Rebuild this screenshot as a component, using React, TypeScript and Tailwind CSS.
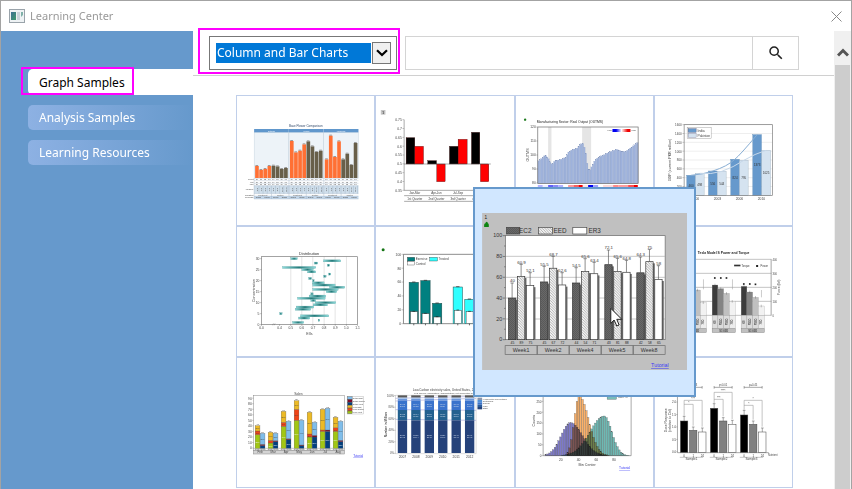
import React from "react";
import { MdSearch } from "react-icons/md";

type Anchor = "start" | "middle" | "end";

function T({ x, y, s = 11, a = "middle", fill = "#444", rot, bold, children }: {
  x: number; y: number; s?: number; a?: Anchor; fill?: string; rot?: boolean; bold?: boolean; children: React.ReactNode;
}) {
  return (
    <text x={x} y={y} fontSize={s} textAnchor={a} fill={fill} fontWeight={bold ? 700 : 400}
      transform={rot ? `rotate(-90 ${x} ${y})` : undefined}>
      {children}
    </text>
  );
}

function R({ x1, x2, y1, y2, fill, stroke, sw = 1, o }: {
  x1: number; x2: number; y1: number; y2: number; fill: string; stroke?: string; sw?: number; o?: number;
}) {
  return <rect x={x1} y={y1} width={x2 - x1} height={y2 - y1} fill={fill} stroke={stroke} strokeWidth={sw} opacity={o} />;
}

function L({ d, c = "#555", w = 2 }: { d: string; c?: string; w?: number }) {
  return <path d={d} stroke={c} strokeWidth={w} fill="none" />;
}

function Chart({ box, children }: { box: string; children: React.ReactNode }) {
  return (
    <svg viewBox={box} className="block h-full w-full font-['Liberation_Sans',Arial,sans-serif]" aria-hidden="true">
      {children}
    </svg>
  );
}

function TutorialText({ x, y, s = 12 }: { x: number; y: number; s?: number }) {
  return <text x={x} y={y} fontSize={s} fill="#3a3af5" textDecoration="underline">Tutorial</text>;
}

function FlowerChart() {
  const tops = [
    [219, 231, 228, 219, 218, 220, 228, 225],
    [144, 178, 173, 154, 145, 160, 177, 173],
    [199, 128, 192, 145, 199, 182, 216, 150],
  ];
  return (
    <Chart box="6 9 411 387">
      <T x={212} y={103} s={9} fill="#334a6b">Base Flower Comparison</T>
      {tops.map((g, i) => {
        const x = 57 + i * 104.5;
        return (
          <g key={i}>
            <R x1={x} x2={x + 104} y1={118} y2={256} fill="#edf3f8" stroke="#b5c6d6" />
            <R x1={x} x2={x + 104} y1={108} y2={118} fill="#6097cc" />
            <T x={x + 52} y={116} s={7} fill="#fff">{["setosa", "versic", "virginica"][i]}</T>
            <R x1={x} x2={x + 104} y1={278} y2={302} fill="#cfdeeb" />
            <R x1={x} x2={x + 104} y1={309} y2={318} fill="#c3d7ea" />
            {g.map((t, j) => {
              const bx = x + 3 + j * 12.4;
              return (
                <g key={j}>
                  <R x1={bx} x2={bx + 11} y1={t} y2={255} fill={j < 4 ? "#ff7034" : "#685f49"} />
                  <R x1={bx + 1} x2={bx + 9} y1={t - 3} y2={t} fill="#9a9a9a" />
                  {[261, 269, 276].map((y) => <T key={y} x={bx + 5} y={y} s={6}>{10 + j}</T>)}
                  <T x={bx + 8} y={290} s={7} rot>{4 + j}.2</T>
                  <L d={`M${bx + 11.5} 278V302`} c="#90a6ba" w={1} />
                </g>
              );
            })}
            <T x={x + 26} y={308} s={6}>Treatment</T>
            <T x={x + 78} y={308} s={6}>Control</T>
            {[13, 39, 65, 91].map((d) => <T key={d} x={x + d} y={316} s={6}>Group</T>)}
            <L d={`M${x} 256V318M${x + 52} 303V318`} c="#8fa2b5" w={1} />
          </g>
        );
      })}
      {[["Count", 262], ["Min", 269], ["Max", 276], ["Measure", 292], ["Condition", 308], ["Replicate", 316]].map(([t, y]) => (
        <T key={t} x={55} y={Number(y)} s={6} a="end">{t}</T>
      ))}
      <L d="M57 263H370M57 271H370M57 278H370M57 302H370M57 309H370M57 318H370" c="#9fb0c2" w={1} />
    </Chart>
  );
}

function QuarterChart() {
  const labels = ["0.75", "0.7", "0.65", "0.6", "0.55", "0.5", "0.45", "0.4", "0.35"];
  const bars = [
    [94, 120, 134, 213], [159, 185, 203, 213], [224, 250, 160, 213], [290, 315, 118, 213],
    [120, 146, 160, 213], [186, 211, 213, 266], [250, 277, 139, 213], [317, 342, 213, 266],
  ];
  return (
    <Chart box="4 9 411 387">
      <R x1={18} x2={32} y1={51} y2={65} fill="#c4c4c4" />
      <T x={25} y={62} s={10} bold>1</T>
      {labels.map((l, i) => (
        <g key={l}>
          <T x={81} y={84 + i * 26.5} s={10} a="end">{l}</T>
          <L d={`M83 ${80 + i * 26.5}H88`} w={1} />
        </g>
      ))}
      {bars.map(([a, b, c, d], i) => <R key={i} x1={a} x2={b} y1={c} y2={d} fill={i < 4 ? "#000" : "#f00"} stroke="#300" />)}
      <L d="M88 80V292M88 213H348M88 292H348M88 308H348M88 325H348" w={1.5} />
      {["Jan-Mar", "Apr-Jun", "Jul-Sep", "Oct-Dec"].map((m, i) => (
        <g key={m}>
          <T x={120 + i * 65} y={304} s={9}>{m}</T>
          <T x={120 + i * 65} y={320} s={9}>{["1st", "2nd", "3rd", "4th"][i]} Quarter</T>
        </g>
      ))}
    </Chart>
  );
}

function OutputChart() {
  const pts = [[67, 205], [80, 195], [89, 186], [98, 195], [104, 208], [110, 215], [118, 203], [130, 201], [140, 198], [152, 192], [158, 178], [170, 170], [185, 166], [194, 154], [202, 151], [206, 160], [212, 185], [217, 225], [222, 234], [228, 222], [238, 202], [250, 192], [265, 186], [280, 178], [304, 169], [315, 174], [330, 176], [345, 165], [355, 157], [368, 147]];
  const top = (x: number) => {
    const i = Math.max(0, pts.findIndex((p) => p[0] > x) - 1);
    const [a, b] = [pts[i], pts[i + 1]];
    return a[1] + ((x - a[0]) / (b[0] - a[0])) * (b[1] - a[1]);
  };
  const strip: [number, number, string][] = [[67, 82, "#b4b4ff"], [82, 98, "#eeeeff"], [98, 113, "#6060f8"], [113, 128, "#8a8af8"], [128, 143, "#b0b0ff"], [158, 174, "#ff9a9a"], [174, 189, "#f86060"], [189, 202, "#f00000"], [202, 218, "#ffe4e4"], [218, 233, "#0000f0"], [233, 248, "#a0a0ff"], [263, 293, "#ffdada"], [293, 308, "#ff8a8a"], [308, 338, "#ff9e9e"], [338, 354, "#ff5050"], [354, 367, "#f00000"]];
  return (
    <Chart box="2 9 411 387">
      <defs>
        <linearGradient id="heat"><stop stopColor="#0000f0" offset=".2" /><stop stopColor="#fff" offset=".5" /><stop stopColor="#f00000" offset=".85" /></linearGradient>
      </defs>
      <circle cx={29} cy={80} r={3.5} fill="#1c7a1c" />
      <T x={64} y={90} s={10} a="start" fill="#222">Manufacturing Sector: Real Output (OUTMS)</T>
      <R x1={98} x2={108} y1={102} y2={271} fill="#e5e5e5" />
      <R x1={200} x2={227} y1={102} y2={271} fill="#e5e5e5" />
      {Array.from({ length: 70 }, (_, i) => {
        const x = 67 + i * 4.3;
        return <R key={i} x1={x} x2={x + 4.3} y1={top(x + 2)} y2={271} fill="#9eb2dc" stroke="#8698bd" sw={0.5} />;
      })}
      <R x1={67} x2={368} y1={102} y2={271} fill="none" stroke="#666" sw={2} />
      {[120, 110, 100, 90, 80].map((n, i) => (
        <g key={n}><T x={61} y={106 + i * 42} s={10} a="end">{n}</T><L d={`M62 ${102 + i * 42}H67`} w={1} /></g>
      ))}
      <T x={42} y={186} s={11} rot>OUTMS</T>
      <R x1={291} x2={345} y1={108} y2={117} fill="url(#heat)" />
      <T x={289} y={115} s={7} a="end">Low</T><T x={347} y={115} s={7} a="start">High</T>
      {strip.map(([a, b, c]) => <R key={a} x1={a} x2={b} y1={276} y2={284} fill={c} />)}
    </Chart>
  );
}

function GdpChart() {
  const dark = [[100, 247, 460], [165, 234, 556], [232, 199, 824], [298, 125, 1373]];
  const light = [[126, 241, 498], [192, 235, 544], [258, 202, 795], [325, 172, 1025]];
  return (
    <Chart box="5 9 411 387">
      {[0, 1, 2, 3, 4, 5, 6, 7].map((i) => (
        <g key={i}>
          <L d={`M92 ${95 + i * 26.5}H357`} c="#ccc" w={1} />
          <L d={`M87 ${95 + i * 26.5}H92`} w={1} />
          <T x={85} y={99 + i * 26.5} s={9} a="end">{1600 - i * 200}</T>
        </g>
      ))}
      {dark.map(([x, y, v]) => <g key={v}><R x1={x} x2={x + 26} y1={y} y2={307} fill="#6699cc" stroke="#4e7fae" /><T x={x + 13} y={(y + 307) / 2 + 4} s={9} fill="#333">{v}</T></g>)}
      {light.map(([x, y, v]) => <g key={v}><R x1={x} x2={x + 26} y1={y} y2={307} fill="#d5e3f0" stroke="#8da3b8" /><T x={x + 13} y={(y + 307) / 2 + 4} s={9} fill="#333">{v}</T></g>)}
      <path d="M112 247Q150 244 178 234Q222 220 244 199Q260 186 311 125" stroke="#88aed4" strokeWidth={3} fill="none" />
      <path d="M139 241Q172 245 205 235Q240 223 271 202Q305 182 338 172" stroke="#c6d8ea" strokeWidth={3} fill="none" />
      <R x1={92} x2={357} y1={95} y2={307} fill="none" stroke="#777" sw={2} />
      <R x1={101} x2={173} y1={103} y2={136} fill="#fff" stroke="#777" />
      <R x1={104} x2={128} y1={107} y2={118} fill="#6699cc" stroke="#446" />
      <R x1={104} x2={128} y1={121} y2={133} fill="#d5e3f0" stroke="#668" />
      <T x={132} y={117} a="start" s={10}>India</T>
      <T x={132} y={131} a="start" s={10}>Pakistan</T>
      {[2000, 2003, 2006, 2010].map((n, i) => <T key={n} x={126 + i * 66} y={322} s={10}>{n}</T>)}
      <T x={53} y={201} s={11} rot>GDP (current PKR million)</T>
    </Chart>
  );
}

function DistributionChart() {
  const bars = [[167, 187], [265, 317], [237, 248], [276, 284], [142, 242], [200, 234], [217, 242], [280, 287], [265, 273], [220, 230], [232, 237], [232, 267], [233, 300], [283, 329], [233, 309], [273, 305], [227, 234], [222, 272], [187, 270], [227, 242], [240, 302], [234, 277], [183, 236], [180, 227], [0, 0], [133, 141], [196, 281], [190, 224], [249, 254], [172, 206]];
  return (
    <Chart box="6 6 411 387">
      <defs><linearGradient id="tealFade"><stop stopColor="#8edcdc" offset="0" /><stop stopColor="#247a7a" offset=".5" /><stop stopColor="#8edcdc" offset="1" /></linearGradient></defs>
      <T x={222} y={89} s={12} fill="#333">Distribution</T>
      {[167, 200, 233, 267, 300, 334].map((x) => <L key={x} d={`M${x} 95V298`} c="#d8d8d8" />)}
      {bars.map(([a, b], i) => b > 0 && <R key={i} x1={a} x2={b} y1={98 + i * 6.6} y2={104 + i * 6.6} fill="url(#tealFade)" stroke="#579c9c" sw={0.8} />)}
      <R x1={79} x2={367} y1={95} y2={298} fill="none" stroke="#777" sw={2} />
      {[30, 25, 20, 15, 10, 5, 0].map((n, i) => <g key={n}><T x={73} y={105 + i * 33} s={10} a="end">{n}</T><L d={`M74 ${101 + i * 33}H79`} w={1} /></g>)}
      {["0.0", "0.4", "0.5", "0.6", "0.7", "0.8", "0.9", "1.0", "1.1"].map((n, i) => {
        const x = i === 0 ? 79 : 100 + i * 33.4;
        return <g key={n}><T x={x} y={312} s={10}>{n}</T><L d={`M${x} 298V303`} w={1} /></g>;
      })}
      <L d="M112 301L115 295M117 301L120 295" w={1} />
      <T x={223} y={329} s={11}>EIIs</T>
      <T x={60} y={197} s={11} rot>Concentration</T>
    </Chart>
  );
}

function ExerciseChart() {
  const bars: [number, number, number, string][] = [[523, 172, 260, "#008080"], [558, 167, 266, "#008080"], [593, 235, 276, "#008080"], [655, 186, 256, "#30ffff"], [690, 223, 260, "#30ffff"], [725, 240, 268, "#30ffff"]];
  return (
    <Chart box="424 6 411 387">
      <circle cx={445} cy={74} r={4.5} fill="#157515" />
      <L d="M506 88H800M506 88V296H800" w={2} />
      {[100, 80, 60, 40, 20, 0].map((n, i) => <g key={n}><T x={499} y={92 + i * 41.6} s={10} a="end">{n}</T><L d={`M500 ${88 + i * 41.6}H506`} w={1} /></g>)}
      {bars.map(([x, t, w, c]) => (
        <g key={x}>
          <R x1={x} x2={x + 28} y1={t} y2={296} fill={c} stroke="#1c4a4a" sw={1.5} />
          <R x1={x + 4} x2={x + 25} y1={w} y2={296} fill="#fff" stroke="#444" sw={1.5} />
          <L d={`M${x + 9} ${t - 1}H${x + 19}M${x + 10} ${w - 1}H${x + 18}M${x + 14} 296V301`} c="#222" w={2} />
        </g>
      ))}
      <R x1={518} x2={540} y1={97} y2={108} fill="#008080" stroke="#222" />
      <R x1={585} x2={608} y1={97} y2={108} fill="#30ffff" stroke="#222" />
      <R x1={518} x2={540} y1={110} y2={120} fill="#fff" stroke="#222" />
      <T x={543} y={106} a="start" s={9}>Exercise</T>
      <T x={611} y={106} a="start" s={9}>Treated</T>
      <T x={543} y={119} a="start" s={9}>Control</T>
    </Chart>
  );
}

function TorqueChart() {
  const groups = [[-22, 175, 187, 195, 233], [65, 180, 191, 205, 229], [152, 184, 201, 217, 243]];
  return (
    <Chart box="-106 6 411 387">
      <T x={22} y={87} s={10} a="start" bold fill="#222">Tesla Model S Power and Torque</T>
      <L d="M-80 103H243M-80 145H243M-80 187H243M-80 229H243M-80 271H243" c="#888" w={1.5} />
      <L d="M242 103V271" c="#777" />
      {[400, 300, 200, 100, 0].map((n, i) => <T key={n} x={246} y={107 + i * 42} s={8} a="start">{n}</T>)}
      <T x={270} y={187} s={10} rot>Force (lbf)</T>
      {groups.map(([x, ...tops]) => (
        <g key={x}>
          {tops.map((t, j) => {
            const bx = x + j * 17.3;
            return (
              <g key={j}>
                <R x1={bx} x2={bx + 17.3} y1={t} y2={271} fill={["#3c3c3c", "#848484", "#c0c0c0", "#f2f2f2"][j]} stroke="#888" sw={0.7} />
                <R x1={bx} x2={bx + 17.3} y1={271} y2={311} fill={j === 3 ? "#ededed" : "#dcdcdc"} stroke="#999" />
                <text x={bx + 12} y={291} fontSize={8} textAnchor="middle" fontWeight={700} fill="#444" transform={`rotate(-90 ${bx + 12} 291)`}>{["60", "P85D", "P90D", "70D"][j]}</text>
                <L d={`M${bx + 8.5} ${t - 4}V${t + 4}`} w={1} />
              </g>
            );
          })}
          <L d={`M${x + 61} ${x > 100 ? 195 : 163}V${x > 100 ? 217 : 193}`} c="#999" w={1.5} />
          <R x1={x} x2={x + 70} y1={311} y2={323} fill="#c0c0c0" stroke="#777" />
          <T x={x + 35} y={320} s={8} bold>S3 60D</T>
        </g>
      ))}
      {[[73, 159], [91, 159], [108, 159], [160, 177], [178, 177], [195, 178]].map(([x, y]) => <R key={x} x1={x - 2.5} x2={x + 2.5} y1={y - 2.5} y2={y + 2.5} fill="#222" />)}
      <R x1={131} x2={150} y1={119} y2={124} fill="#333" />
      <T x={153} y={125} s={8} a="start">Torque</T>
      <R x1={197} x2={203} y1={120} y2={126} fill="#222" />
      <T x={210} y={125} s={8} a="start">Power</T>
    </Chart>
  );
}

function SalesChart() {
  const left = [[233, 222, 206], [258, 250, 226], [208, 196, 163], [190, 157, 131], [240, 231, 166], [223, 219, 157], [223, 212, 181]];
  const right = [[266, 262, 229], [254, 251, 229], [248, 245, 193], [266, 264, 190], [240, 235, 196], [223, 219, 154], [254, 250, 193]];
  const lc = ["#a1c614", "#f04416", "#ecba26"];
  const rc = ["#03407e", "#7a0a28", "#7fbdea"];
  const stack = (tops: number[], colors: string[], x: number) =>
    tops.map((t, j) => {
      const b = j === 0 ? 274 : tops[j - 1];
      return (
        <g key={j}>
          <R x1={x} x2={x + 14.5} y1={t} y2={b} fill={colors[j]} stroke="#555" sw={0.8} />
          {b - t > 8 && <T x={x + 7} y={(t + b) / 2 + 3} s={6} fill={j === 0 ? "#eee" : "#444"}>{Math.round((b - t) * 0.6)}%</T>}
        </g>
      );
    });
  return (
    <Chart box="6 3 411 387">
      <T x={190} y={114} s={10}>Sales</T>
      <R x1={55} x2={328} y1={116} y2={280} fill="#fff" stroke="#888" sw={1.5} />
      <R x1={55} x2={328} y1={280} y2={291} fill="#d4d4d4" stroke="#888" sw={1.5} />
      <L d="M55 274H328" w={1} />
      {left.map((t, i) => (
        <g key={i}>
          {stack(t, lc, 60 + i * 39)}
          {stack(right[i], rc, 75 + i * 39)}
          <T x={67 + i * 39} y={t[2] - 2} s={7}>{Math.round((274 - t[2]) * 0.6)}</T>
          <T x={82 + i * 39} y={right[i][2] - 2} s={7}>{Math.round((274 - right[i][2]) * 0.6)}</T>
          <T x={75 + i * 39} y={279} s={6}>North South</T>
          <T x={75 + i * 39} y={289} s={9}>{["Feb", "Mar", "Apr", "May", "Jun", "Jul", "Aug"][i]}</T>
        </g>
      ))}
      {Array.from({ length: 10 }, (_, i) => <g key={i}><T x={50} y={277 - i * 16.6} s={10} a="end">{i * 10}</T><L d={`M51 ${273 - i * 16.6}H55`} w={1} /></g>)}
      {["Retail East", "Retail Central", "Retail West", "Web East", "Web Central", "Web West"].map((n, i) => (
        <g key={n}>
          <R x1={337} x2={351} y1={119 + i * 8.6} y2={127 + i * 8.6} fill={[rc[2], rc[1], rc[0], lc[2], lc[1], lc[0]][i]} stroke="#333" />
          <T x={353} y={126 + i * 8.6} s={6} a="start">{n}</T>
        </g>
      ))}
      <R x1={336} x2={386} y1={118} y2={171} fill="none" stroke="#999" />
      <TutorialText x={354} y={299} s={9} />
    </Chart>
  );
}

function EnergyChart() {
  const bands: [number, number, string][] = [[115, 122, "#585858"], [122, 126, "#a8c4ea"], [126, 131, "#6c97dc"], [131, 159, "#3a73cc"], [159, 190, "#23618f"], [190, 288, "#25427a"]];
  return (
    <Chart box="424 3 411 387">
      <T x={534} y={102} s={9} a="start">Low-Carbon electricity sales, United States, 2007-2012</T>
      <T x={538} y={111} s={7} a="start">U.S. Energy Information Administration, net generation by source</T>
      <L d="M482 115V290H724V115Z" c="#999" w={1} />
      <L d="M482 124L724 118M482 132L724 124M482 158L724 160M482 187L724 190" c="#8f8fd0" w={1.5} />
      {[0, 1, 2, 3, 4, 5].map((i) => {
        const x = 489 + i * 40.3;
        return (
          <g key={i}>
            {bands.map(([a, b, c]) => <R key={a} x1={x} x2={x + 28} y1={a} y2={b} fill={c} />)}
            {[143, 151, 173, 180, 236, 243].map((y) => <T key={y} x={x + 14} y={y} s={7} fill="#c6d3e6">{1900 + y + i}</T>)}
            <T x={x + 14} y={302} s={10}>{2007 + i}</T>
          </g>
        );
      })}
      {[100, 80, 60, 40, 20, 0].map((n, i) => <g key={n}><T x={477} y={119 + i * 34.6} s={8} a="end">{n}%</T><L d={`M478 ${116 + i * 34.6}H482`} w={1} /></g>)}
      <T x={458} y={203} s={9} rot bold>Number in Million</T>
      {["Hydroelectric Conventional", "Geothermal", "Nuclear", "Wind", "Other"].map((n, i) => (
        <g key={n}>
          <R x1={728} x2={742} y1={122 + i * 7} y2={129 + i * 7} fill={["#8a96ac", "#4f8fd6", "#3a73cc", "#2a5b9a", "#25427a"][i]} />
          <T x={744} y={128 + i * 7} s={6} a="start">{n}</T>
        </g>
      ))}
    </Chart>
  );
}

function HistogramChart() {
  const sets = [
    { m: 290, h: 99, l: 28, r: 36, c: "#7d79c9", lo: 211 },
    { m: 316, h: 180, l: 14, r: 28, c: "#fbb169", lo: 275 },
    { m: 391, h: 119, l: 42, r: 23, c: "#6db9b3", lo: 260 },
  ];
  return (
    <Chart box="127 3 411 387">
      <L d="M208 90V296H472V90" w={1.5} />
      {sets.map((s) => (
        <g key={s.m} className="mix-blend-multiply">
          {Array.from({ length: 48 }, (_, i) => 208 + i * 5.5).filter((x) => x >= s.lo).map((x) => {
            const d = (x + 2.7 - s.m) / (x < s.m ? s.l : s.r);
            const h = s.h * Math.exp(-d * d / 2);
            return h > 0.8 && <R key={x} x1={x} x2={x + 5.5} y1={296 - h} y2={296} fill={s.c} stroke="#555" sw={0.8} />;
          })}
        </g>
      ))}
      {[250, 200, 150, 100, 50, 0].map((n, i) => <g key={n}><T x={203} y={137 + i * 32.6} s={9} a="end">{n}</T><L d={`M204 ${133 + i * 32.6}H208`} w={1} /></g>)}
      {[20, 40, 60, 80].map((n, i) => <T key={n} x={261 + i * 53.3} y={311} s={10}>{n}</T>)}
      <T x={340} y={327} s={11}>Bin Center</T>
      <T x={184} y={191} s={11} rot>Counts</T>
      <R x1={400} x2={428} y1={114} y2={127} fill="#78bdb8" stroke="#555" />
      <T x={432} y={124} s={10} a="start">Item C</T>
      <TutorialText x={436} y={337} s={10} />
    </Chart>
  );
}

function ResponseChart() {
  const groups = [[-30, 588, 616, 621], [60, 550, 588, 598], [150, 570, 598, 621]];
  return (
    <Chart box="-106 399 411 387">
      <L d="M-39 480V683H235" w={1.5} />
      {["2.5", "2.0", "1.5", "1.0", "0.5", "0.0"].map((n, i) => <g key={n}><T x={-43} y={498 + i * 37.3} s={9} a="end">{n}</T><L d={`M-43 ${494 + i * 37.3}H-39`} w={1} /></g>)}
      <T x={-69} y={586} s={10} rot>Dose Response</T>
      <T x={-58} y={586} s={10} rot>(relative to Ctrl)</T>
      {groups.map(([x, ...tops], g) => {
        const hi = [526, 502, 526][g];
        const lo = [538, 523, 541][g];
        return (
          <g key={x}>
            {tops.map((t, j) => {
              const bx = x + j * 27.3;
              return (
                <g key={j}>
                  <L d={`M${bx + 11} ${t - [14, 10, 12][j]}V${t}M${bx + 7} ${t - [14, 10, 12][j]}H${bx + 15}`} w={1.5} />
                  <R x1={bx} x2={bx + 22} y1={t} y2={682} fill={["#000", "#808080", "#fff"][j]} stroke="#444" sw={1.5} />
                  <T x={bx + 11} y={695} s={9}>{["0", "1", "24"][j]}</T>
                </g>
              );
            })}
            <L d={`M${x + 11} 487H${x + 65}M${x + 11} 483V491M${x + 65} 483V491`} w={1.5} />
            <L d={`M${x + 11} ${tops[0] - 16}V${hi}H${x + 65}V${tops[2] - 16}M${x + 11} ${lo}H${x + 38}V${tops[1] - 14}`} c="#888" w={1.5} />
            <T x={x + 38} y={484} s={8}>{["p=0.03", "p<0.01", "p=0.45"][g]}</T>
            <T x={x + 38} y={hi} s={9}>{["***", "****", "*"][g]}</T>
            <T x={x + 25} y={lo} s={9}>{["*", "***", "*"][g]}</T>
            <L d={`M${x - 2} 697H${x + 68}`} w={1} />
            <T x={x + 33} y={706} s={9}>Sample{g + 1}</T>
          </g>
        );
      })}
      <T x={233} y={692} s={8} a="start">Nutrient</T>
    </Chart>
  );
}

function WeeklyChart() {
  const groups = [
    { x: 115, w: "Week1", v: [40, 60.9, 52.1], e: [300, 244, 269], n: [45, 89, 75] },
    { x: 211, w: "Week2", v: [55.5, 68.7, 52.6], e: [250, 220, 269], n: [45, 67, 72] },
    { x: 307, w: "Week4", v: [54.5, 65.6, 63.4], e: [254, 227, 238], n: [44, 54, 71] },
    { x: 404, w: "Week5", v: [72.1, 65.6, 64.8], e: [201, 226, 232], n: [43, 81, 88] },
    { x: 500, w: "Week8", v: [64.3, 75, 58], e: [222, 199, 248], n: [42, 58, 65] },
  ];
  const fills = ["url(#dots)", "url(#hatch)", "#fff"];
  return (
    <Chart box="36 90 615 471">
      <defs>
        <pattern id="hatch" width="8" height="8" patternUnits="userSpaceOnUse"><rect width="8" height="8" fill="#f4f4f4" /><path d="M-1 -1L9 9M-3 5L3 11M5 -3L11 3" stroke="#777" strokeWidth="1.6" /></pattern>
        <pattern id="dots" width="6" height="6" patternUnits="userSpaceOnUse"><rect width="6" height="6" fill="#575757" /><circle cx="2" cy="2" r="1.1" fill="#909090" /><circle cx="5" cy="5" r="1.1" fill="#909090" /></pattern>
      </defs>
      <R x1={36} x2={651} y1={90} y2={561} fill="#c0c0c0" />
      <T x={47} y={107} s={14} fill="#111">1</T>
      <path d="M42 126Q42 121 46 121Q46 116 50 116Q53 117 53 121Q57 122 56 132H42Z" fill="#0c8412" />
      <R x1={106} x2={585} y1={158} y2={470} fill="#fff" stroke="#666" sw={2} />
      <L d="M106 220H585M106 283H585M106 345H585M106 408H585" c="#aaa" w={2} />
      {[100, 80, 60, 40, 20, 0].map((n, i) => (
        <g key={n}><T x={96} y={163 + i * 62.4} s={16} a="end" fill="#333">{n}</T><L d={`M98 ${158 + i * 62.4}H106${i < 5 ? `M102 ${189 + i * 62.4}H106` : ""}`} w={2} /></g>
      ))}
      {groups.map((g, gi) => (
        <g key={g.w}>
          {g.v.map((v, j) => {
            const x = g.x + j * 27;
            const t = 470 - v * 3.12;
            return (
              <g key={j}>
                <R x1={x + 20} x2={x + 27} y1={t + 5} y2={470} fill="#6c6c6c" />
                <R x1={x} x2={x + 22} y1={t} y2={470} fill={fills[j]} stroke="#333" sw={2} />
                <L d={`M${x + 11} ${g.e[j]}V${t}M${x + 6} ${g.e[j]}H${x + 16}`} w={2} />
                <T x={x + 12} y={g.e[j] - 2} s={13} fill="#333">{v}</T>
                <T x={x + 12} y={483} s={10} fill="#222">{g.n[j]}</T>
              </g>
            );
          })}
          <R x1={105 + gi * 96} x2={201 + gi * 96} y1={488} y2={514} fill="none" stroke="#666" sw={2} />
          <T x={153 + gi * 96} y={506} s={16} fill="#333">{g.w}</T>
        </g>
      ))}
      {["EC2", "EED", "ER3"].map((n, i) => (
        <g key={n}>
          <R x1={[109, 205, 308][i]} x2={[149, 247, 350][i]} y1={133} y2={153} fill={fills[i]} stroke="#444" sw={2} />
          <T x={[147, 250, 355][i]} y={150} s={19} a="start" fill="#333">{n}</T>
        </g>
      ))}
      <TutorialText x={543} y={552} s={16} />
      <path d="M422 376V421L432 411L440 429L447 426L440 409H455Z" fill="#fff" stroke="#222" strokeWidth={3} />
    </Chart>
  );
}

const samples: { name: string; chart?: React.ReactNode }[] = [
  { name: "Grouped columns with table", chart: <FlowerChart /> },
  { name: "Quarterly columns", chart: <QuarterChart /> },
  { name: "Manufacturing output", chart: <OutputChart /> },
  { name: "GDP columns", chart: <GdpChart /> },
  { name: "Distribution", chart: <DistributionChart /> },
  { name: "Overlapped columns", chart: <ExerciseChart /> },
  { name: "Weekly columns" },
  { name: "Power and torque", chart: <TorqueChart /> },
  { name: "Sales", chart: <SalesChart /> },
  { name: "Stacked columns", chart: <EnergyChart /> },
  { name: "Histogram", chart: <HistogramChart /> },
  { name: "Grouped response", chart: <ResponseChart /> },
];

function TitleBar() {
  return (
    <header className="flex h-[30px] shrink-0 items-center bg-white pl-2 pr-[9px]">
      <svg viewBox="0 0 16 14" className="mr-[5px] h-[14px] w-4" aria-hidden="true">
        <defs><linearGradient id="app" x2="1" y2="1"><stop stopColor="#3c6f94" /><stop offset="1" stopColor="#3f9a6c" /></linearGradient></defs>
        <rect x=".5" y=".5" width="15" height="13" fill="#eef2f4" stroke="#9aa3aa" />
        <rect x="2" y="3" width="5" height="8" fill="url(#app)" />
        <rect x="8" y="3" width="3" height="8" fill="#c9d3da" />
        <path d="M12 3H14V6L12 8Z" fill="#7fb0a8" />
      </svg>
      <h1 className="flex-1 text-[11px] leading-4 text-[#999]">Learning Center</h1>
      <button type="button" aria-label="Close" className="h-[11px] w-[11px]">
        <svg viewBox="0 0 11 11" className="block h-[11px] w-[11px]"><path d="M.5 .5L10.5 10.5M10.5 .5L.5 10.5" stroke="#888" fill="none" /></svg>
      </button>
    </header>
  );
}

function Sidebar() {
  return (
    <nav className="flex w-48 shrink-0 flex-col gap-[10px] bg-[#6699cc] pl-[27px] pt-[38px]">
      <div className="relative">
        <button type="button" className="block h-[26px] w-full rounded-l-[5px] bg-white pl-[11px] pt-[2px] text-left text-[12px] leading-5 text-black">Graph Samples</button>
        <span className="pointer-events-none absolute -left-[7px] -top-[2px] h-7 w-[113px] border-2 border-[#ff00ff]" />
      </div>
      <button type="button" className="h-[25px] w-full rounded-l-[5px] bg-linear-to-r from-[#8db1e3] to-[#6699cc] pl-[11px] text-left text-[12px] leading-5 text-white">Analysis Samples</button>
      <button type="button" className="h-[25px] w-full rounded-l-[5px] bg-linear-to-r from-[#8db1e3] to-[#6699cc] pl-[11px] text-left text-[12px] leading-5 text-white">Learning Resources</button>
    </nav>
  );
}

function Toolbar() {
  return (
    <div className="flex h-[45px] shrink-0 border-b border-[#d0d0d0] pl-4 pr-[35px] pt-[5px]">
      <div className="relative mr-2 flex h-[34px] w-[188px] items-center border border-[#777] pl-[6px]">
        <select aria-label="Category" defaultValue="Column and Bar Charts" className="h-5 w-[155px] appearance-none bg-[#0078d7] pl-px text-[12px] leading-5 text-white outline-none">
          <option>Column and Bar Charts</option>
        </select>
        <span className="pointer-events-none ml-px flex h-[22px] w-[19px] items-center justify-center border border-[#777] bg-[#f0f0f0]">
          <svg viewBox="0 0 12 8" className="h-2 w-3"><path d="M1 1.2L6 6L11 1.2" stroke="#000" strokeWidth="2.2" fill="none" /></svg>
        </span>
        <span className="pointer-events-none absolute -left-3 -top-[9px] h-[46px] w-[202px] border-2 border-[#ff00ff]" />
      </div>
      <form className="flex h-[34px] flex-1" onSubmit={(e) => e.preventDefault()}>
        <input type="text" aria-label="Search" className="min-w-0 flex-1 border border-[#d4d4d4] bg-white px-2 text-[12px] outline-none" />
        <button type="submit" aria-label="Search" className="flex w-[46px] items-center justify-center border border-l-0 border-[#d4d4d4] text-[#222]">
          <MdSearch size={18} />
        </button>
      </form>
    </div>
  );
}

export default function App() {
  return (
    <div className="flex h-screen flex-col overflow-hidden border-x border-t border-[#a3a3a3] bg-white font-['Noto_Sans','Open_Sans',sans-serif]">
      <TitleBar />
      <div className="flex min-h-0 flex-1">
        <Sidebar />
        <main className="flex min-w-0 flex-1 flex-col">
          <Toolbar />
          <ul className="grid grid-cols-4 pl-[43px] pr-[41px] pt-[19px]">
            {samples.map((s) => (
              <li key={s.name} className={s.chart ? "h-[131px]" : "relative z-10 h-[131px]"}>
                <button type="button" aria-label={s.name} className="block h-full w-full border border-[#c0cfea] bg-white">{s.chart}</button>
                {!s.chart && (
                  <div className="absolute -bottom-10 -left-[42px] -right-[42px] -top-[39px] border-2 border-[#6699cc] bg-[#d1e7ff] px-[7px] pt-6">
                    <div className="h-[157px]"><WeeklyChart /></div>
                  </div>
                )}
              </li>
            ))}
          </ul>
        </main>
        <div className="flex w-[17px] shrink-0 flex-col bg-[#f0f0f0] px-px">
          <button type="button" aria-label="Scroll up" className="flex h-[34px] items-center justify-center pt-2">
            <svg viewBox="0 0 12 9" className="h-[9px] w-3"><path d="M1 7.5L6 2.5L11 7.5" stroke="#555" strokeWidth="3" fill="none" /></svg>
          </button>
          <div className="flex-1 bg-[#cdcdcd]" />
        </div>
      </div>
    </div>
  );
}
